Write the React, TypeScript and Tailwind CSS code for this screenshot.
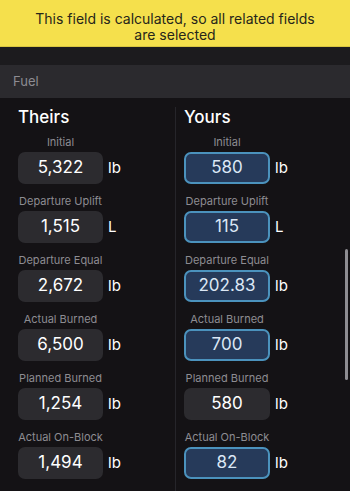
type Field = {
  label: string;
  theirs: string;
  yours: string;
  unit: string;
  selected: boolean;
};

const fields: Field[] = [
  { label: "Initial", theirs: "5,322", yours: "580", unit: "lb", selected: true },
  { label: "Departure Uplift", theirs: "1,515", yours: "115", unit: "L", selected: true },
  { label: "Departure Equal", theirs: "2,672", yours: "202.83", unit: "lb", selected: true },
  { label: "Actual Burned", theirs: "6,500", yours: "700", unit: "lb", selected: true },
  { label: "Planned Burned", theirs: "1,254", yours: "580", unit: "lb", selected: false },
  { label: "Actual On-Block", theirs: "1,494", yours: "82", unit: "lb", selected: true },
];

function ValueRow({
  label,
  value,
  unit,
  selected,
  width,
}: {
  label: string;
  value: string;
  unit: string;
  selected: boolean;
  width: string;
}) {
  return (
    <div className="flex flex-col">
      <div
        className={`${width} flex justify-center whitespace-nowrap text-[11px] leading-[14px] text-[#8d8c92] mb-[3px]`}
      >
        {label}
      </div>
      <div className="flex items-center">
        {selected ? (
          <div
            className={`${width} h-[32px] rounded-[7px] border-2 border-[#4b92bd] bg-[#263a5a] flex items-center justify-center text-[17px] text-[#dbe7f5]`}
          >
            {value}
          </div>
        ) : (
          <div
            className={`${width} h-[32px] rounded-[7px] bg-[#2c2b2f] flex items-center justify-center text-[17px] text-white`}
          >
            {value}
          </div>
        )}
        <span className="ml-[5px] text-[15px] text-white">{unit}</span>
      </div>
    </div>
  );
}

export default function App() {
  return (
    <div
      className="relative w-[350px] h-[491px] overflow-hidden bg-[#141215] flex flex-col"
      style={{ fontFamily: "Inter, 'Open Sans', sans-serif" }}
    >
      <div className="shrink-0 h-[47px] bg-[#f5e04c] flex justify-center px-6 pt-[11px] border-b border-[#d9c640]">
        <p className="text-center text-[14px] leading-[16px] text-[#27261a]">
          This field is calculated, so all related fields are selected
        </p>
      </div>
      <div className="shrink-0 h-[18px] bg-[#1c1b1e]" />
      <div className="shrink-0 h-[33px] bg-[#2b2a2e] flex items-center px-[13px]">
        <span className="text-[13px] text-[#8d8c92]">Fuel</span>
      </div>

      <div className="flex flex-1">
        {/* Theirs */}
        <div className="w-[175px] pl-[18px] pt-[8px]">
          <h2 className="text-[17px] leading-[22px] font-medium text-white">Theirs</h2>
          <div className="mt-[7px] flex flex-col gap-[10px]">
            {fields.map((f) => (
              <ValueRow
                key={f.label}
                label={f.label}
                value={f.theirs}
                unit={f.unit}
                selected={false}
                width="w-[85px]"
              />
            ))}
          </div>
        </div>

        {/* Yours */}
        <div className="flex-1 pl-[9px] pt-[8px] relative">
          <div className="absolute left-0 top-[9px] bottom-0 w-px bg-[#26252a]" />
          <h2 className="text-[17px] leading-[22px] font-medium text-white">Yours</h2>
          <div className="mt-[7px] flex flex-col gap-[10px]">
            {fields.map((f) => (
              <ValueRow
                key={f.label}
                label={f.label}
                value={f.yours}
                unit={f.unit}
                selected={f.selected}
                width="w-[86px]"
              />
            ))}
          </div>
        </div>
      </div>

      {/* scroll indicator */}
      <div className="absolute left-[345px] top-[249px] w-[3px] h-[131px] rounded-full bg-[#8e8d92]" />
    </div>
  );
}
